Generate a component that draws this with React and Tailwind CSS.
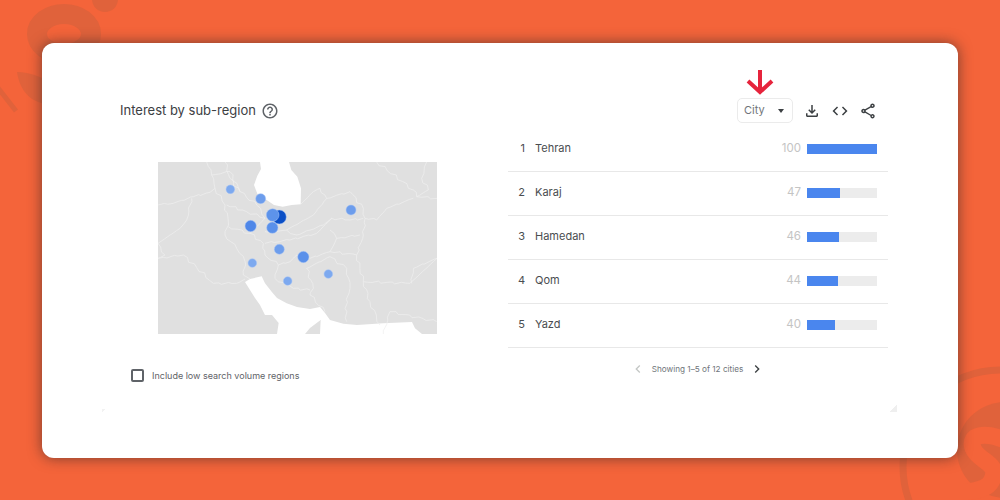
const rows = [
    { rank: 1, name: 'Tehran', value: 100 },
    { rank: 2, name: 'Karaj', value: 47 },
    { rank: 3, name: 'Hamedan', value: 46 },
    { rank: 4, name: 'Qom', value: 44 },
    { rank: 5, name: 'Yazd', value: 40 },
];

const dots = [
    { x: 388, y: 186, r: 21, fill: '#0b4fc6' },
    { x: 368, y: 180, r: 19, fill: '#5d93ea' },
    { x: 302, y: 213, r: 17, fill: '#4f87e8' },
    { x: 367, y: 218, r: 17, fill: '#5a90ea' },
    { x: 460, y: 306, r: 17, fill: '#5a90ea' },
    { x: 332, y: 131, r: 15, fill: '#6d9dec' },
    { x: 603, y: 165, r: 15, fill: '#6d9dec' },
    { x: 388, y: 283, r: 15, fill: '#6d9dec' },
    { x: 241, y: 103, r: 13, fill: '#7da9ef' },
    { x: 307, y: 324, r: 13, fill: '#7da9ef' },
    { x: 413, y: 378, r: 13, fill: '#7da9ef' },
    { x: 535, y: 357, r: 13, fill: '#7da9ef' },
];

const borders = [
    [[24, 150], [70, 145], [130, 125], [180, 112], [195, 100]],
    [[24, 265], [90, 220], [110, 195], [125, 130]],
    [[24, 310], [100, 300], [190, 385], [260, 385], [285, 372]],
    [[24, 265], [45, 300], [24, 310]],
    [[170, 21], [185, 60], [195, 100], [225, 150], [235, 200], [225, 240], [260, 280], [285, 320], [280, 360], [300, 372]],
    [[680, 21], [790, 105], [800, 125], [861, 130]],
    [[452, 148], [490, 110], [510, 100], [530, 130], [600, 110], [640, 160], [645, 190], [640, 240], [620, 300], [640, 380], [780, 385], [861, 310]],
    [[645, 190], [680, 195], [710, 160], [790, 130]],
    [[830, 21], [815, 70], [835, 105], [800, 125]],
    [[640, 380], [660, 440], [690, 510]],
    [[225, 21], [240, 70], [270, 110], [320, 150], [345, 190]],
    [[185, 60], [240, 50], [270, 110]],
    [[230, 150], [290, 170], [345, 190], [300, 235], [235, 215]],
    [[345, 230], [410, 225], [490, 180], [530, 130]],
    [[410, 225], [440, 240], [520, 210], [545, 190], [600, 195], [640, 190]],
    [[300, 235], [340, 265], [345, 300], [385, 330], [375, 370], [430, 400], [480, 405]],
    [[345, 265], [420, 255], [500, 235], [545, 190]],
    [[540, 225], [560, 250], [540, 290], [480, 310], [440, 300], [420, 320], [385, 330]],
    [[540, 290], [620, 300]],
    [[470, 340], [540, 305], [590, 340], [600, 400], [585, 460], [590, 500]],
    [[470, 340], [490, 400], [480, 420], [525, 470]],
    [[560, 250], [630, 240]],
    [[700, 537], [720, 470], [860, 500]],
    [[785, 385], [790, 340], [861, 310]],
];

// borders on the map are not straight, so break each segment into small uneven steps
const wobble = pts => {
    const out = [];
    pts.forEach(([x, y], i) => {
        if (i > 0) {
            const [px, py] = pts[i - 1];
            const steps = Math.max(2, Math.round(Math.hypot(x - px, y - py) / 14));
            for (let s = 1; s < steps; s++) {
                const t = s / steps;
                const j = Math.sin((px + y) * 0.7 + s * 2.3) * 4;
                out.push([px + (x - px) * t + j, py + (y - py) * t - j * 0.8]);
            }
        }
        out.push([x, y]);
    });
    return 'M' + out.map(p => `${p[0].toFixed(1)} ${p[1].toFixed(1)}`).join('L');
};

const Icon = ({ d, className }) => (
    <svg viewBox="0 0 24 24" className={className} fill="currentColor">
        <path d={d} />
    </svg>
);

const ChevronRight = 'M10 6L8.59 7.41 13.17 12l-4.58 4.59L10 18l6-6z';
const ChevronLeft = 'M15.41 7.41L14 6l-6 6 6 6 1.41-1.41L10.83 12z';

const Backdrop = () => (
    <svg className="absolute inset-0" width="1000" height="500" viewBox="0 0 1000 500" fill="none">
        <ellipse cx="64" cy="34" rx="27" ry="20" stroke="#e0623b" strokeWidth="20" />
        <path d="M17 72C30 72 45 78 50 84L50 104C32 104 20 92 17 72Z" fill="#e0623b" />
        <path d="M-2 88L16 111" stroke="#e0623b" strokeWidth="5" />
        <circle cx="105" cy="-1" r="13" fill="#e0623b" />
        <circle cx="1005" cy="450" r="48" fill="#e0623b" />
        <path d="M1005 440C985 432 968 434 973 448C978 462 1000 462 992 480C986 494 960 492 935 492" stroke="#f4643a" strokeWidth="17" />
        <circle cx="1000" cy="467" r="97" stroke="#e0623b" strokeWidth="7" />
    </svg>
);

const IranMap = () => (
    <svg viewBox="24 21 837 516" className="block w-[279px] h-[172px] bg-[#e0e0e0]" fill="none">
        <path d="M330 21L333 42L322 62L312 90L322 116L350 135L372 150L398 155L425 150L452 148L453 100L442 65L424 45L417 21Z" fill="#fff" />
        <path d="M285 381L300 372L335 364L345 385L365 410L381 429L410 445L441 456L480 462L510 456L525 474L540 495L580 506L621 510L700 505L786 501L795 520L816 537L510 537L512 495L480 519L465 537L381 537L386 504L366 480L345 480L330 450L315 429L300 405Z" fill="#fff" />
        {borders.map(pts => (
            <path key={pts.join()} d={wobble(pts)} stroke="#efefef" strokeWidth="2.2" />
        ))}
        {dots.map(dot => (
            <circle key={`${dot.x}-${dot.y}`} cx={dot.x} cy={dot.y} r={dot.r} fill={dot.fill} stroke="#a9c5f5" strokeWidth="1.5" />
        ))}
    </svg>
);

export default function App() {
    return (
        <div className="relative w-[1000px] h-[500px] overflow-hidden bg-[#f4643a] pt-[43px] pl-[42px] font-['Inter',sans-serif]">
            <Backdrop />
            <div className="relative w-[916px] h-[415px] rounded-xl bg-white pt-[55px] shadow-[0_0_14px_rgba(50,40,40,0.65)]">
                {/* Header */}
                <div className="flex items-center h-[25px] pl-[78px]">
                    <h2 className="text-[13px] font-normal text-[#3c4043]">Interest by sub-region</h2>
                    <Icon className="w-[18px] h-[18px] ml-[5px] text-[#5f6368]" d="M11 18h2v-2h-2v2zm1-16C6.48 2 2 6.48 2 12s4.48 10 10 10 10-4.48 10-10S17.52 2 12 2zm0 18c-4.41 0-8-3.59-8-8s3.59-8 8-8 8 3.59 8 8-3.59 8-8 8zm0-14c-2.21 0-4 1.79-4 4h2c0-1.1.9-2 2-2s2 .9 2 2c0 2-3 1.75-3 5h2c0-2.25 3-2.5 3-5 0-2.21-1.79-4-4-4z" />
                    <div className="relative ml-auto flex items-center justify-between w-[56px] h-[25px] rounded-[5px] border border-[#ebebeb] pl-[6px] pr-[8px]">
                        <svg className="absolute left-[6px] -top-[30px] w-[32px] h-[26px]" viewBox="0 0 32 26" fill="none">
                            <path d="M16 1V23M4 12L16 23L28 12" stroke="#e6243c" strokeWidth="4" />
                        </svg>
                        <span className="text-[11px] text-[#70757a]">City</span>
                        <span className="w-0 h-0 border-x-[3px] border-x-transparent border-t-[4px] border-t-[#3c4043]" />
                    </div>
                    <div className="flex items-center gap-[10px] ml-[10px] mr-[81px] text-[#3c4043]">
                        <Icon className="w-[18px] h-[18px]" d="M18 15v3H6v-3H4v3c0 1.1.9 2 2 2h12c1.1 0 2-.9 2-2v-3h-2zm-1-4l-1.41-1.41L13 12.17V4h-2v8.17L8.41 9.59 7 11l5 5 5-5z" />
                        <Icon className="w-[18px] h-[18px]" d="M9.4 16.6L4.8 12l4.6-4.6L8 6l-6 6 6 6 1.4-1.4zm5.2 0l4.6-4.6-4.6-4.6L16 6l6 6-6 6-1.4-1.4z" />
                        <Icon className="w-[18px] h-[18px]" d="M18 16.08c-.76 0-1.44.3-1.96.77L8.91 12.7c.05-.23.09-.46.09-.7s-.04-.47-.09-.7l7.05-4.11c.54.5 1.25.81 2.04.81 1.66 0 3-1.34 3-3s-1.34-3-3-3-3 1.34-3 3c0 .24.04.47.09.7L8.04 9.81C7.5 9.31 6.79 9 6 9c-1.66 0-3 1.34-3 3s1.34 3 3 3c.79 0 1.5-.31 2.04-.81l7.12 4.16c-.05.21-.08.43-.08.65 0 1.61 1.31 2.92 2.92 2.92s2.92-1.31 2.92-2.92-1.31-2.92-2.92-2.92zM18 4c.55 0 1 .45 1 1s-.45 1-1 1-1-.45-1-1 .45-1 1-1zM6 13c-.55 0-1-.45-1-1s.45-1 1-1 1 .45 1 1-.45 1-1 1zm12 7.02c-.55 0-1-.45-1-1s.45-1 1-1 1 .45 1 1-.45 1-1 1z" />
                    </div>
                </div>

                {/* Body */}
                <div className="flex mt-[5px]">
                    <div className="w-[466px] pt-[34px]">
                        <div className="ml-[116px]">
                            <IranMap />
                        </div>
                        <div className="flex items-center ml-[89px] mt-[35px]">
                            <span className="w-[13px] h-[13px] rounded-[2px] border-2 border-[#5f6368]" />
                            <span className="ml-[8px] text-[9px] text-[#5f6368]">Include low search volume regions</span>
                        </div>
                    </div>
                    <div className="w-[380px]">
                        {rows.map(row => (
                            <div key={row.rank} className="flex items-center h-[44px] pb-[2px] border-b border-[#e8e8e8] text-[11px] text-[#4a4d50]">
                                <span className="w-[17px] text-right">{row.rank}</span>
                                <span className="ml-[10px]">{row.name}</span>
                                <span className="ml-auto text-[11.5px] text-[#c4c4c4]">{row.value}</span>
                                <div className="w-[70px] h-[10px] ml-[6px] mr-[11px] bg-[#ececec]">
                                    <div className="h-full bg-[#4a86ee]" style={{ width: `${row.value * 0.7}px` }} />
                                </div>
                            </div>
                        ))}
                        <div className="flex items-center justify-center h-[42px] pr-[1px] text-[8.2px] text-[#70757a]">
                            <Icon className="w-[16px] h-[16px] text-[#c4c7c5]" d={ChevronLeft} />
                            <span className="mx-[6px]">Showing 1–5 of 12 cities</span>
                            <Icon className="w-[16px] h-[16px] text-[#3c4043]" d={ChevronRight} />
                        </div>
                    </div>
                </div>

                {/* faint corners of the inner panel */}
                <span className="absolute left-[60px] top-[366px] w-[4px] h-[4px] bg-[linear-gradient(45deg,#f2f2f2_50%,transparent_50%)] rotate-90" />
                <span className="absolute left-[848px] top-[362px] w-[7px] h-[7px] bg-[linear-gradient(135deg,transparent_50%,#efefef_50%)]" />
            </div>
        </div>
    );
}
